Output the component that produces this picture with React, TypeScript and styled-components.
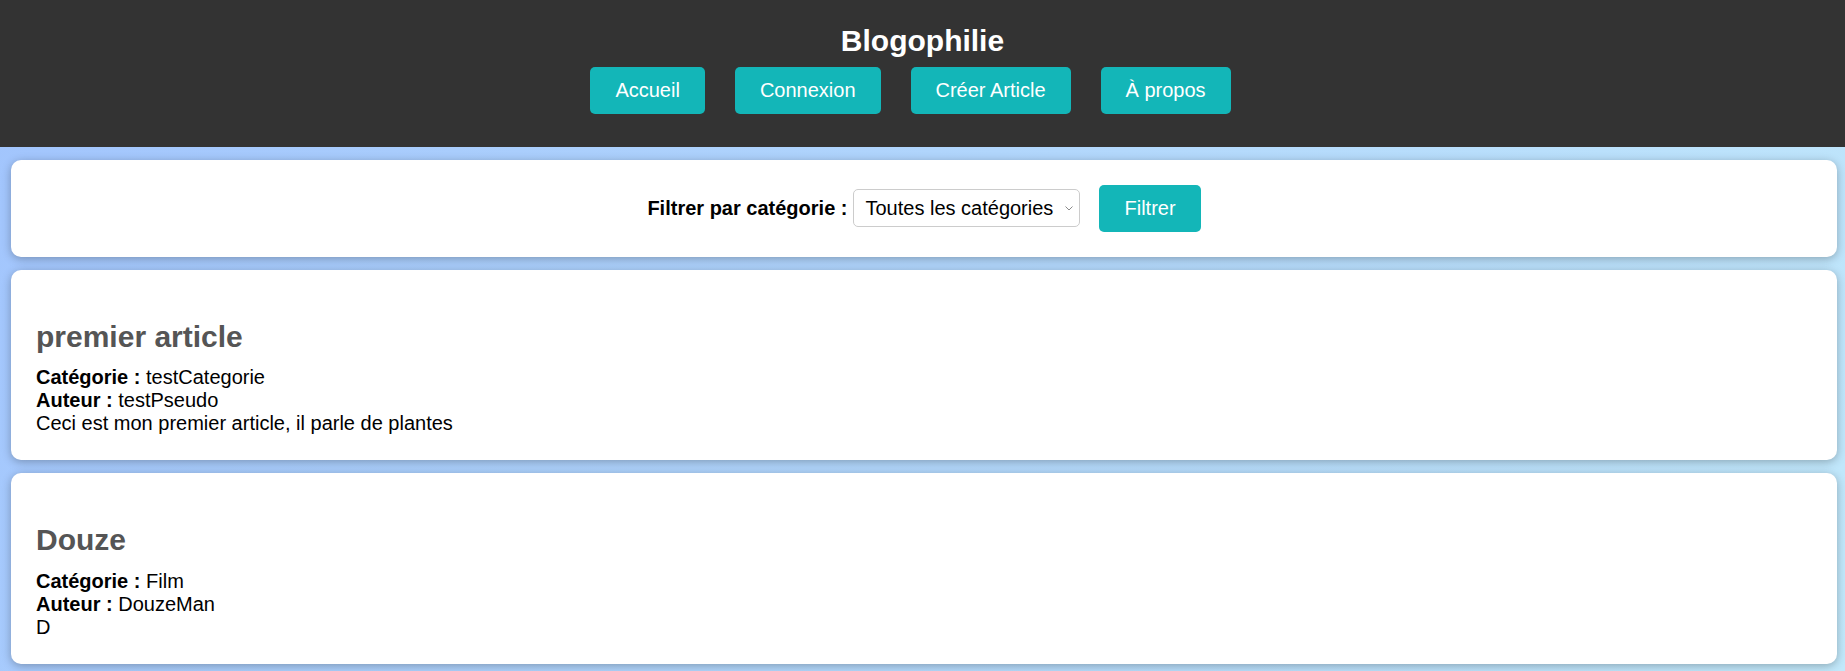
import React from "react";
import styled, { createGlobalStyle } from "styled-components";

const GlobalStyle = createGlobalStyle`
  html, body {
    margin: 0;
    padding: 0;
  }
  body {
    font-family: "Liberation Sans", Arial, sans-serif;
    font-size: 20px;
    min-height: 100vh;
    background: linear-gradient(120deg, #a1c4fd 0%, #c2e9fb 100%);
    background-attachment: fixed;
  }
  * {
    box-sizing: border-box;
  }
`;

const Header = styled.header`
  background: #333333;
  padding: 24px 0 33px;
  text-align: center;
`;

const SiteTitle = styled.h1`
  margin: 0 0 8px;
  color: #ffffff;
  font-size: 30px;
  font-weight: bold;
  line-height: 34.5px;
`;

const Nav = styled.nav`
  display: flex;
  justify-content: center;
  gap: 30px;
  padding-right: 24px;
`;

const TealButton = styled.button`
  background: #13b6b8;
  color: #ffffff;
  border: none;
  border-radius: 5px;
  font-family: "Liberation Sans", Arial, sans-serif;
  font-size: 20px;
  line-height: 23px;
  padding: 12px 25px;
  cursor: pointer;
`;

const Main = styled.main`
  display: flex;
  flex-direction: column;
  gap: 13px;
  padding: 13px 8px 13px 11px;
`;

const Card = styled.section`
  background: #ffffff;
  border-radius: 10px;
  box-shadow: 0 2px 10px rgba(0, 0, 0, 0.28);
  padding: 25px;
`;

const FilterForm = styled.form`
  display: flex;
  justify-content: center;
  align-items: center;
`;

const FilterLabel = styled.label`
  font-weight: bold;
  font-size: 20px;
  color: #000;
  margin-right: 6px;
`;

const SelectWrap = styled.div`
  position: relative;
  margin-right: 19px;
`;

const Select = styled.select`
  display: block;
  width: 227px;
  height: 38px;
  appearance: none;
  -webkit-appearance: none;
  font-family: "Liberation Sans", Arial, sans-serif;
  font-size: 20px;
  color: #000;
  background: #fff;
  border: 1px solid #cccccc;
  border-radius: 5px;
  padding: 0 0 0 11px;
`;

const Chevron = styled.svg`
  position: absolute;
  right: 7px;
  top: 50%;
  width: 8px;
  height: 5px;
  margin-top: -2px;
  pointer-events: none;
`;

const ArticleTitle = styled.h2`
  margin: 25px 0 12px;
  font-size: 30px;
  line-height: 34.5px;
  font-weight: bold;
  color: #555555;
`;

const Line = styled.div`
  font-size: 20px;
  line-height: 23px;
  color: #000;
`;

const Key = styled.strong`
  font-weight: bold;
`;

type Article = {
  title: string;
  category: string;
  author: string;
  body: string;
};

const articles: Article[] = [
  {
    title: "premier article",
    category: "testCategorie",
    author: "testPseudo",
    body: "Ceci est mon premier article, il parle de plantes",
  },
  { title: "Douze", category: "Film", author: "DouzeMan", body: "D" },
];

export default function App() {
  return (
    <>
      <GlobalStyle />
      <Header>
        <SiteTitle>Blogophilie</SiteTitle>
        <Nav>
          <TealButton>Accueil</TealButton>
          <TealButton>Connexion</TealButton>
          <TealButton>Créer Article</TealButton>
          <TealButton>À propos</TealButton>
        </Nav>
      </Header>
      <Main>
        <Card>
          <FilterForm onSubmit={(e) => e.preventDefault()}>
            <FilterLabel htmlFor="cat">Filtrer par catégorie :</FilterLabel>
            <SelectWrap>
              <Select id="cat" defaultValue="">
                <option value="">Toutes les catégories</option>
                <option value="testCategorie">testCategorie</option>
                <option value="Film">Film</option>
              </Select>
              <Chevron viewBox="0 0 8 5" aria-hidden="true">
                <path d="M0.5 0.5 L4 4 L7.5 0.5" fill="none" stroke="#8a8a8a" strokeWidth="1" />
              </Chevron>
            </SelectWrap>
            <TealButton type="submit">Filtrer</TealButton>
          </FilterForm>
        </Card>
        {articles.map((a) => (
          <Card key={a.title}>
            <ArticleTitle>{a.title}</ArticleTitle>
            <Line>
              <Key>Catégorie :</Key> {a.category}
            </Line>
            <Line>
              <Key>Auteur :</Key> {a.author}
            </Line>
            <Line>{a.body}</Line>
          </Card>
        ))}
      </Main>
    </>
  );
}
